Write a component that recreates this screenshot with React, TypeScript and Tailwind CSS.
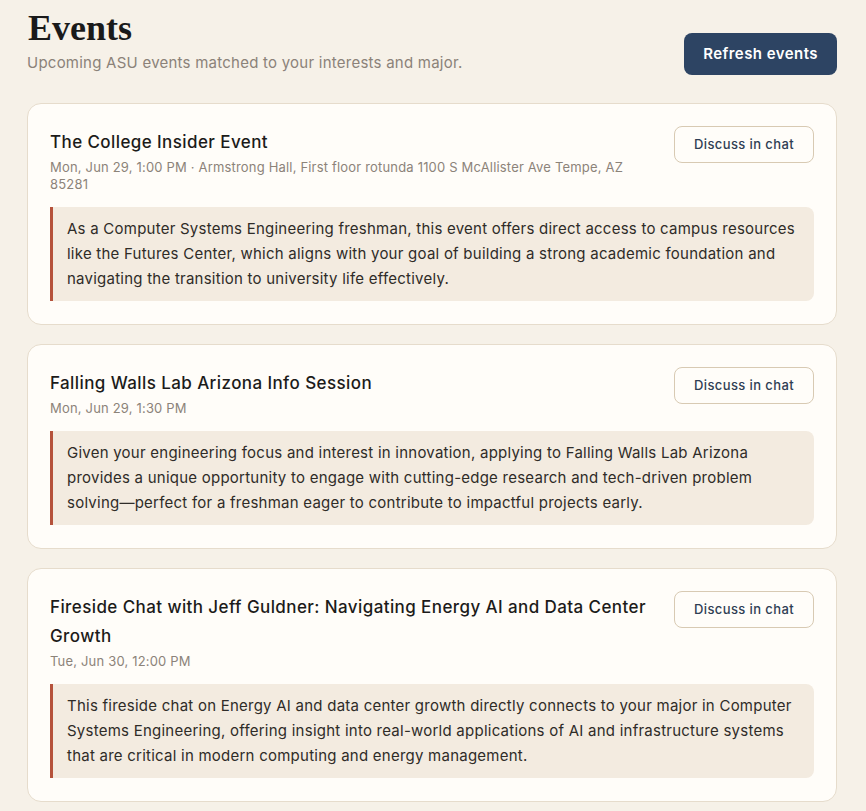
const events = [
  {
    id: 1,
    title: "The College Insider Event",
    meta: "Mon, Jun 29, 1:00 PM · Armstrong Hall, First floor rotunda 1100 S McAllister Ave Tempe, AZ 85281",
    reason:
      "As a Computer Systems Engineering freshman, this event offers direct access to campus resources like the Futures Center, which aligns with your goal of building a strong academic foundation and navigating the transition to university life effectively.",
  },
  {
    id: 2,
    title: "Falling Walls Lab Arizona Info Session",
    meta: "Mon, Jun 29, 1:30 PM",
    reason:
      "Given your engineering focus and interest in innovation, applying to Falling Walls Lab Arizona provides a unique opportunity to engage with cutting-edge research and tech-driven problem solving—perfect for a freshman eager to contribute to impactful projects early.",
  },
  {
    id: 3,
    title: "Fireside Chat with Jeff Guldner: Navigating Energy AI and Data Center Growth",
    meta: "Tue, Jun 30, 12:00 PM",
    reason:
      "This fireside chat on Energy AI and data center growth directly connects to your major in Computer Systems Engineering, offering insight into real-world applications of AI and infrastructure systems that are critical in modern computing and energy management.",
  },
]

export default function App() {
  return (
    <div
      className="min-h-screen bg-[#f6f1e8] pl-[27px] pr-[29px] pt-[7px] pb-10 text-[#1c1b19]"
      style={{ fontFamily: "Inter, 'Noto Sans', sans-serif" }}
    >
      {/* HEADER */}
      <div className="flex justify-between items-start">
        <div>
          <h1
            className="text-[36px] leading-[42px] font-bold text-[#1a1a1a] pl-[1px]"
            style={{ fontFamily: "'Liberation Serif', 'DejaVu Serif', serif" }}
          >
            Events
          </h1>
          <p className="mt-[3px] text-[15px] leading-[22px] tracking-[0.016em] text-[#8b8279]">
            Upcoming ASU events matched to your interests and major.
          </p>
        </div>

        <button className="mt-[26px] h-[42px] px-[19px] rounded-[8px] bg-[#2d4463] text-white text-[15px] font-semibold tracking-[0.03em]">
          Refresh events
        </button>
      </div>

      {/* LIST */}
      <div className="mt-[28px] flex flex-col gap-[19px]">
        {events.map((ev) => (
          <div
            key={ev.id}
            className="rounded-[14px] border border-[#e6dccc] bg-[#fffdf9] px-[22px] pt-[22px] pb-[23px]"
          >
            <div className="flex justify-between items-start gap-4">
              <div className="flex-1 pt-[2px]">
                <h2 className="text-[17px] leading-[29px] font-medium tracking-[0.024em] text-[#1c1b19]">
                  {ev.title}
                </h2>
                <p className="mt-[2px] text-[13px] leading-[17px] tracking-[0.014em] text-[#8c8379]">
                  {ev.meta}
                </p>
              </div>

              <button className="shrink-0 h-[37px] px-[19px] rounded-[8px] border border-[#d8cab3] bg-[#fffdf9] text-[13px] font-medium tracking-[0.03em] text-[#2f3e54]">
                Discuss in chat
              </button>
            </div>

            <div className="mt-[14px] border-l-[3px] border-[#b5523b] bg-[#f3ebe0] rounded-r-[8px] pl-[14px] pr-[14px] pt-[9px] pb-[10px] text-[15px] leading-[25px] tracking-[0.016em] text-[#2f2c28]">
              {ev.reason}
            </div>
          </div>
        ))}
      </div>
    </div>
  )
}
